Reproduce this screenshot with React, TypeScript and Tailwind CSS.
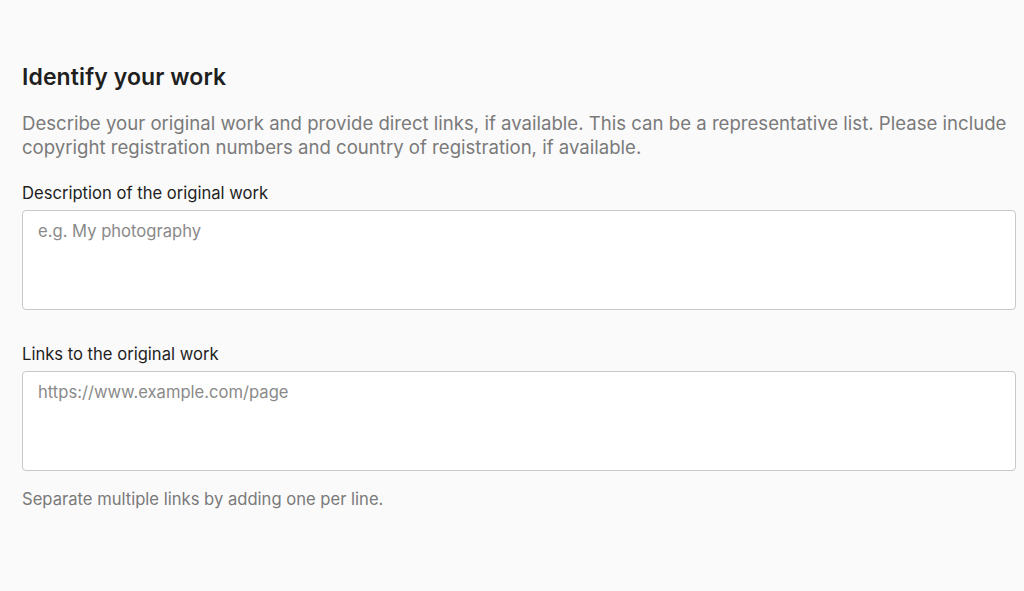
import React from "react";

export default function App() {
  return (
    <div className="w-[1024px] h-[591px] bg-[#fafafa] overflow-hidden" style={{ fontFamily: "Inter, 'Noto Sans', sans-serif" }}>
      <div className="pl-[22px] pr-[8px] pt-[62px]">
        <h2 className="text-[23px] leading-[30px] font-semibold text-[#1f1f1f] tracking-[0.1px]">Identify your work</h2>
        <p className="mt-[19px] text-[18.6px] leading-[24px] text-[#7a7a7a]">
          Describe your original work and provide direct links, if available. This can be a representative list. Please include copyright registration numbers and country of registration, if available.
        </p>
        <label className="block mt-[23px] text-[16.6px] leading-[22px] text-[#1f1f1f]">Description of the original work</label>
        <div className="mt-[6px] h-[100px] border border-[#c8c8c8] rounded-[4px] bg-white px-[15px] pt-[9px] text-[16.6px] leading-[22px] text-[#8a8a8a]">
          e.g. My photography
        </div>
        <label className="block mt-[33px] text-[16.6px] leading-[22px] text-[#1f1f1f]">Links to the original work</label>
        <div className="mt-[6px] h-[100px] border border-[#c8c8c8] rounded-[4px] bg-white px-[15px] pt-[9px] text-[16.6px] leading-[22px] text-[#8a8a8a]">
          https://www.example.com/page
        </div>
        <p className="mt-[17px] text-[16.6px] leading-[22px] text-[#7a7a7a]">Separate multiple links by adding one per line.</p>
      </div>
    </div>
  );
}
